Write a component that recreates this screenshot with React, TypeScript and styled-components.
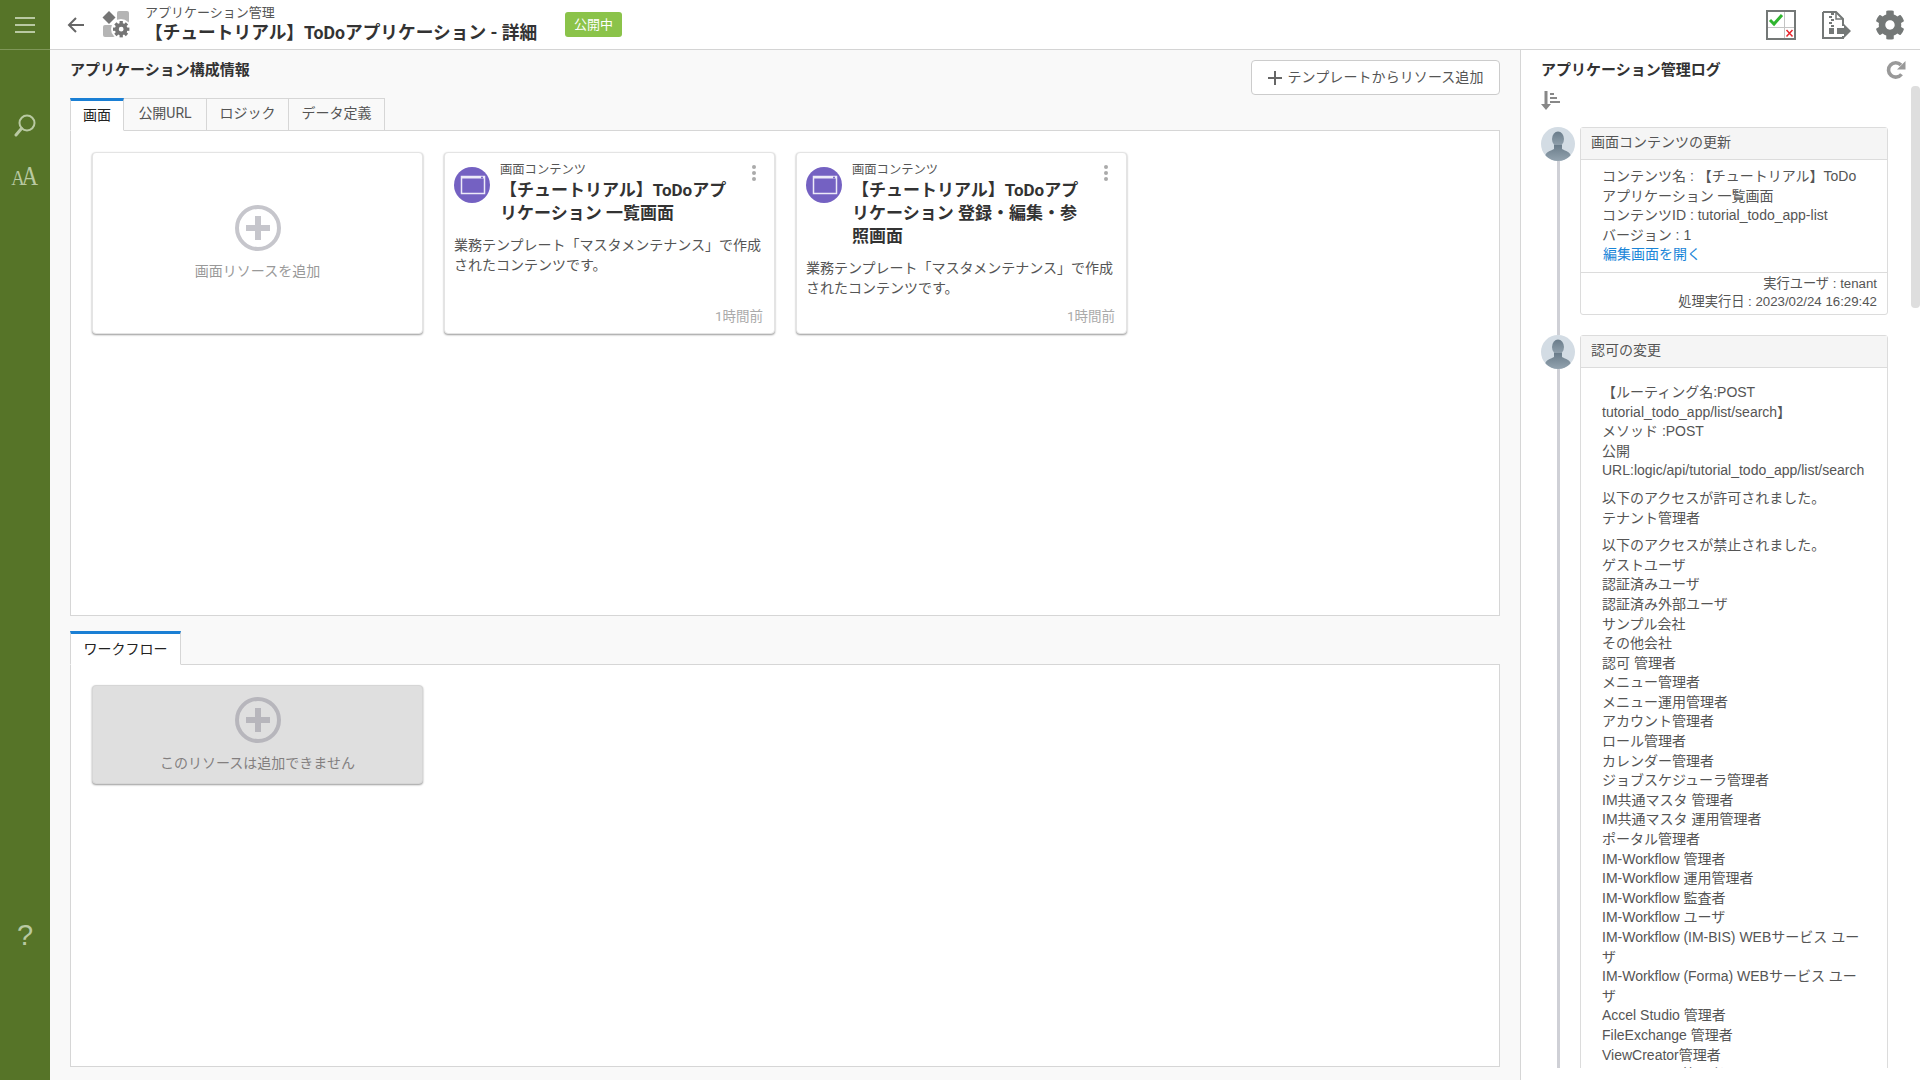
import styled, { createGlobalStyle } from 'styled-components';
import { FaCog } from 'react-icons/fa';

const CJK = `"Noto Sans CJK JP", sans-serif`;

const GlobalStyle = createGlobalStyle`
  html, body { margin: 0; padding: 0; height: 100%; background: #fff; }
  * { box-sizing: border-box; }
  body { font-family: Roboto, ${CJK}; color: #444; overflow: hidden; }
`;

const Page = styled.div`
  display: flex;
  width: 1920px;
  height: 1080px;
  overflow: hidden;
`;

const SideBar = styled.nav`
  width: 50px;
  flex: none;
  background: #567428;
  color: #b9c9a2;
  display: flex;
  flex-direction: column;
  align-items: center;
`;

const SideTop = styled.div`
  width: 100%;
  height: 50px;
  border-bottom: 1px solid #7f9758;
  display: flex;
  align-items: center;
  justify-content: center;
  margin-bottom: 61px;
`;

const SideItem = styled.div<{ $after: number }>`
  height: 28px;
  margin-bottom: ${p => p.$after}px;
  display: flex;
  align-items: center;
  justify-content: center;
`;

const SideAa = styled(SideItem)`
  font-family: "Liberation Serif", serif;
  font-size: 27px;
  letter-spacing: -4px;
  padding-right: 4px;
  align-items: baseline;
  line-height: 28px;
  transform: scaleX(0.85);
  span { font-size: 22px; }
`;

const SideHelp = styled.div`
  margin-top: auto;
  margin-bottom: 130px;
  font-size: 29px;
  line-height: 30px;
  font-family: "Liberation Sans", sans-serif;
`;

const Main = styled.div`
  flex: 1;
  min-width: 0;
  display: flex;
  flex-direction: column;
`;

const Header = styled.header`
  height: 50px;
  flex: none;
  background: #fff;
  border-bottom: 1px solid #d4d4d4;
  display: flex;
  align-items: center;
  padding-left: 16px;
`;

const BackBtn = styled.div`
  width: 20px;
  height: 20px;
  margin-right: 16px;
  display: flex;
`;

const AppIcon = styled.div`
  width: 30px;
  height: 28px;
  margin-right: 13px;
  display: flex;
`;

const TitleBlock = styled.div`
  display: flex;
  flex-direction: column;
  width: 420px;
`;

const Crumb = styled.div`
  font-size: 13px;
  line-height: 15px;
  color: #555;
`;

const PageTitle = styled.h1`
  margin: 1px 0 0;
  font-size: 17.7px;
  font-weight: 700;
  line-height: 24px;
  color: #333;
  white-space: nowrap;
`;

const Badge = styled.div`
  width: 57px;
  height: 25px;
  margin-bottom: 1px;
  padding-bottom: 2px;
  border-radius: 3px;
  background: #8bc34a;
  color: #fff;
  font-size: 13px;
  display: flex;
  align-items: center;
  justify-content: center;
`;

const HeaderTools = styled.div`
  margin-left: auto;
  display: flex;
  align-items: center;
  padding-right: 15px;
  color: #747877;
`;

const ToolIcon = styled.div<{ $gap: number }>`
  display: flex;
  margin-left: ${p => p.$gap}px;
`;

const Body = styled.div`
  flex: 1;
  min-height: 0;
  display: flex;
`;

const LeftPane = styled.section`
  width: 1470px;
  flex: none;
  background: #f9f9f9;
  padding: 10px 20px 0;
  display: flex;
  flex-direction: column;
`;

const SectionHead = styled.div`
  height: 38px;
  display: flex;
  align-items: flex-start;
  justify-content: space-between;
`;

const SectionTitle = styled.h2`
  margin: 0;
  font-size: 15px;
  line-height: 20px;
  font-weight: 700;
  color: #333;
`;

const AddButton = styled.button`
  width: 249px;
  height: 35px;
  background: #fff;
  border: 1px solid #ccc;
  border-radius: 4px;
  font-family: inherit;
  font-size: 14px;
  letter-spacing: 0.08px;
  color: #555;
  display: flex;
  align-items: center;
  justify-content: center;
  gap: 6px;
  padding: 0 0 3px;
`;

const TabBar = styled.div<{ $h: number }>`
  display: flex;
  height: ${p => p.$h}px;
`;

const Tab = styled.div<{ $active?: boolean; $w: number }>`
  width: ${p => p.$w}px;
  height: 100%;
  font-size: 14px;
  display: flex;
  align-items: center;
  justify-content: center;
  padding-bottom: ${p => (p.$active ? 3 : 5)}px;
  position: relative;
  z-index: 1;
  color: ${p => (p.$active ? '#222' : '#555')};
  background: ${p => (p.$active ? '#fff' : '#f9f9f9')};
  border: 1px solid #d6d6d6;
  border-left-width: ${p => (p.$active ? 1 : 0)}px;
  border-top: ${p => (p.$active ? '3px solid #1a7fd4' : '1px solid #d6d6d6')};
  border-bottom: ${p => (p.$active ? '1px solid #fff' : '1px solid #d6d6d6')};
`;

const TabPanel = styled.div<{ $h: number; $after: number; $top: number }>`
  height: ${p => p.$h}px;
  margin-top: -1px;
  margin-bottom: ${p => p.$after}px;
  background: #fff;
  border: 1px solid #d6d6d6;
  padding: ${p => p.$top}px 20px 20px 21px;
  display: flex;
  align-items: flex-start;
  gap: 21px;
`;

const AddCard = styled.div<{ $disabled?: boolean }>`
  width: 331px;
  height: ${p => (p.$disabled ? 99 : 182)}px;
  border-radius: 4px;
  background: ${p => (p.$disabled ? '#dfdfdf' : '#fff')};
  border: 1px solid ${p => (p.$disabled ? '#d6d6d6' : '#e4e4e4')};
  box-shadow: 0 1px 2px rgba(0, 0, 0, 0.4);
  display: flex;
  flex-direction: column;
  align-items: center;
  padding-top: ${p => (p.$disabled ? 11 : 52)}px;
  font-size: 14px;
  line-height: 20px;
  color: ${p => (p.$disabled ? '#837f7f' : '#999')};
`;

const AddLabel = styled.div`
  margin-top: 10px;
`;

const ResCard = styled.article`
  width: 331px;
  height: 182px;
  border-radius: 4px;
  background: #fff;
  border: 1px solid #e4e4e4;
  box-shadow: 0 1px 2px rgba(0, 0, 0, 0.4);
  padding: 9px 11px 7px 9px;
  display: flex;
  flex-direction: column;
`;

const ResHead = styled.div`
  display: flex;
`;

const ResIcon = styled.div`
  width: 36px;
  height: 36px;
  margin: 5px 10px 0 0;
  flex: none;
  display: flex;
`;

const ResText = styled.div`
  flex: 1;
  min-width: 0;
  padding-right: 10px;
`;

const ResType = styled.div`
  font-size: 12.3px;
  line-height: 16px;
  color: #555;
`;

const ResTitle = styled.div`
  font-size: 17px;
  font-weight: 700;
  line-height: 23px;
  color: #333;
  margin-top: 1px;
`;

const Dots = styled.div`
  width: 22px;
  flex: none;
  margin-top: 3px;
  padding-left: 4px;
  display: flex;
  flex-direction: column;
  align-items: center;
  gap: 2px;
  i {
    width: 4px;
    height: 4px;
    border-radius: 50%;
    background: #aaa;
  }
`;

const ResDesc = styled.p`
  margin: 10px 0 0;
  font-size: 14px;
  line-height: 20px;
  color: #555;
`;

const ResTime = styled.div`
  margin-top: auto;
  text-align: right;
  font-size: 13.5px;
  line-height: 20px;
  color: #aaa;
`;

const RightPane = styled.aside`
  width: 400px;
  flex: none;
  background: #fff;
  border-left: 1px solid #d6d6d6;
  padding: 10px 0 0 20px;
  position: relative;
  display: flex;
  flex-direction: column;
`;

const LogHead = styled.div`
  display: flex;
  justify-content: space-between;
  align-items: center;
  height: 20px;
  padding-right: 14px;
  color: #999;
`;

const SortIcon = styled.div`
  height: 42px;
  padding-top: 11px;
  display: flex;
  align-items: flex-start;
`;

const Scrollbar = styled.div`
  position: absolute;
  top: 36px;
  right: 0;
  width: 9px;
  height: 222px;
  border-radius: 4px;
  background: #dedede;
`;

const LogList = styled.div`
  height: 941px;
  margin-top: 5px;
  overflow: hidden;
  padding-right: 32px;
`;

const LogItem = styled.div`
  display: flex;
  gap: 5px;
`;

const LogRail = styled.div`
  width: 34px;
  flex: none;
  display: flex;
  flex-direction: column;
  align-items: center;
`;

const RailLine = styled.div`
  flex: 1;
  width: 3px;
  background: #cfd0d6;
`;

const LogCard = styled.div`
  flex: 1;
  min-width: 0;
  margin-bottom: 20px;
  border: 1px solid #dcdcdc;
  border-radius: 3px;
  font-family: "Liberation Sans", ${CJK};
  font-size: 14px;
  line-height: 19.6px;
  color: #555;
`;

const LogTitle = styled.div`
  height: 32px;
  padding: 0 0 1px 10px;
  background: #f5f5f5;
  border-bottom: 1px solid #dcdcdc;
  display: flex;
  align-items: center;
`;

const LogBody = styled.div<{ $top: number }>`
  padding: ${p => p.$top}px 20px 7px 21px;
  p { margin: 0 0 8px; }
  p:last-child { margin-bottom: 0; }
`;

const LogLink = styled.a`
  color: #1a85d8;
  padding-left: 1px;
`;

const LogFoot = styled.div`
  border-top: 1px solid #dcdcdc;
  padding: 2px 10px 3px;
  text-align: right;
  font-size: 13.25px;
  line-height: 18px;
`;

const Line = styled.div``;

const MenuIcon = () => (
  <svg width="20" height="16" viewBox="0 0 20 16" fill="currentColor">
    <rect x="0" y="0" width="20" height="2" />
    <rect x="0" y="7" width="20" height="2" />
    <rect x="0" y="14" width="20" height="2" />
  </svg>
);

const SearchIcon = () => (
  <svg width="24" height="24" viewBox="0 0 24 24" fill="none" stroke="currentColor">
    <circle cx="14" cy="10" r="7.5" strokeWidth="2" />
    <path d="M8.5 15.5 L3 22" strokeWidth="3" strokeLinecap="round" />
  </svg>
);

const BackIcon = () => (
  <svg width="20" height="20" viewBox="0 0 20 20" fill="none" stroke="#666" strokeWidth="2">
    <path d="M18 10H3M10 3l-7 7 7 7" />
  </svg>
);

const ComposeIcon = () => (
  <svg width="30" height="28" viewBox="0 0 30 28">
    <rect x="15" y="0" width="12" height="12" rx="2" fill="#b5b5b5" />
    <rect x="1" y="14" width="12" height="12" rx="2" fill="#b5b5b5" />
    <path d="M7 0l6.5 6.5-6.5 6.5-6.5-6.5z" fill="#757575" />
    <circle cx="19" cy="18" r="10" fill="#fff" />
    <g transform="translate(11 10) scale(0.032)">
      <circle cx="256" cy="256" r="135" fill="none" stroke="#757575" strokeWidth="120" />
      <g fill="#757575">
        {[0, 45, 90, 135, 180, 225, 270, 315].map(a => (
          <rect key={a} x="205" y="0" width="102" height="120" transform={`rotate(${a} 256 256)`} />
        ))}
      </g>
    </g>
  </svg>
);

const CheckTableIcon = () => (
  <svg width="30" height="30" viewBox="0 0 30 30">
    <rect x="1" y="1" width="28" height="28" fill="#fff" stroke="#747877" strokeWidth="2" />
    <path d="M18.5 2v26M2 17.5h26" stroke="#c4c4c4" strokeWidth="1" />
    <path d="M4 10l4 4 8-9" fill="none" stroke="#2fb52f" strokeWidth="3" />
    <path d="M20.5 20l6 6.5M26.5 20l-6 6.5" stroke="#e8262e" strokeWidth="1.5" />
  </svg>
);

const ZipExportIcon = () => (
  <svg width="29" height="28" viewBox="0 0 29 28">
    <path d="M1 1h13l7 7v7M21 25v2H1V1" fill="none" stroke="#747877" strokeWidth="2" />
    <path d="M14 1v7h7" fill="none" stroke="#747877" strokeWidth="1.5" />
    <path d="M9 2h3v2H9zM7 5h3v2H7zM9 8h3v2H9zM7 11h3v2H7zM9 14h3v2H9z" fill="#747877" />
    <rect x="7" y="17" width="5" height="6" fill="#747877" />
    <path d="M15 17h7v-4l7 7-7 7v-4h-7z" fill="#747877" />
  </svg>
);

const RefreshIcon = () => (
  <svg width="20" height="20" viewBox="0 0 20 20" fill="none">
    <path d="M15.5 14.2A7.2 7.2 0 1 1 15 5" stroke="#999" strokeWidth="3.6" />
    <path d="M19.5 1v8.5H11z" fill="#999" />
  </svg>
);

const SortDownIcon = () => (
  <svg width="20" height="19" viewBox="0 0 20 19" fill="#888">
    <path d="M3.5 0h3v13h3.5l-5 6-5-6h3.5z" />
    <rect x="9" y="2" width="4" height="2" />
    <rect x="9" y="6" width="7" height="2" />
    <rect x="9" y="10" width="10" height="2" />
  </svg>
);

const PlusCircle = ({ color }: { color: string }) => (
  <svg width="46" height="46" viewBox="0 0 46 46">
    <circle cx="23" cy="23" r="21" fill="none" stroke={color} strokeWidth="4" />
    <path d="M20 11h6v9h9v6h-9v9h-6v-9h-9v-6h9z" fill={color} />
  </svg>
);

const ScreenBadge = () => (
  <svg width="36" height="36" viewBox="0 0 36 36">
    <circle cx="18" cy="18" r="18" fill="#7461c2" />
    <rect x="7.5" y="9.5" width="23" height="17" fill="none" stroke="#eceaf8" strokeWidth="1.5" />
    <rect x="7" y="9" width="24" height="2.5" fill="#eceaf8" />
    <circle cx="28" cy="10.5" r="1" fill="#7461c2" />
  </svg>
);

const Avatar = () => (
  <svg width="34" height="34" viewBox="0 0 34 34" style={{ flex: 'none' }}>
    <defs>
      <linearGradient id="sil" x1="0" y1="0" x2="0" y2="1">
        <stop offset="0" stopColor="#6a7c8a" />
        <stop offset="1" stopColor="#93a3af" />
      </linearGradient>
      <clipPath id="round">
        <circle cx="17" cy="17" r="17" />
      </clipPath>
    </defs>
    <circle cx="17" cy="17" r="17" fill="#d3dce4" />
    <g clipPath="url(#round)" fill="url(#sil)">
      <ellipse cx="17" cy="12" rx="6" ry="7.5" />
      <path d="M13 18h8v4c4 2 8 3 9 7v5H4v-5c1-4 5-5 9-7z" />
    </g>
  </svg>
);

const PlusThin = () => (
  <svg width="14" height="14" viewBox="0 0 14 14" stroke="#666" strokeWidth="2" style={{ marginTop: 3 }}>
    <path d="M7 0v14M0 7h14" />
  </svg>
);

const allowed = ['以下のアクセスが許可されました。', 'テナント管理者'];
const denied = [
  '以下のアクセスが禁止されました。',
  'ゲストユーザ',
  '認証済みユーザ',
  '認証済み外部ユーザ',
  'サンプル会社',
  'その他会社',
  '認可 管理者',
  'メニュー管理者',
  'メニュー運用管理者',
  'アカウント管理者',
  'ロール管理者',
  'カレンダー管理者',
  'ジョブスケジューラ管理者',
  'IM共通マスタ 管理者',
  'IM共通マスタ 運用管理者',
  'ポータル管理者',
  'IM-Workflow 管理者',
  'IM-Workflow 運用管理者',
  'IM-Workflow 監査者',
  'IM-Workflow ユーザ',
  'IM-Workflow (IM-BIS) WEBサービス ユーザ',
  'IM-Workflow (Forma) WEBサービス ユーザ',
  'Accel Studio 管理者',
  'FileExchange 管理者',
  'ViewCreator管理者',
  'PageBuilder 管理者',
];

const desc = '業務テンプレート「マスタメンテナンス」で作成されたコンテンツです。';

export default function App() {
  return (
    <Page>
      <GlobalStyle />
      <SideBar>
        <SideTop><MenuIcon /></SideTop>
        <SideItem $after={23}><SearchIcon /></SideItem>
        <SideAa $after={0}><span>A</span>A</SideAa>
        <SideHelp>?</SideHelp>
      </SideBar>
      <Main>
        <Header>
          <BackBtn><BackIcon /></BackBtn>
          <AppIcon><ComposeIcon /></AppIcon>
          <TitleBlock>
            <Crumb>アプリケーション管理</Crumb>
            <PageTitle>【チュートリアル】ToDoアプリケーション - 詳細</PageTitle>
          </TitleBlock>
          <Badge>公開中</Badge>
          <HeaderTools>
            <ToolIcon $gap={0}><CheckTableIcon /></ToolIcon>
            <ToolIcon $gap={26}><ZipExportIcon /></ToolIcon>
            <ToolIcon $gap={24}><FaCog size={30} /></ToolIcon>
          </HeaderTools>
        </Header>
        <Body>
          <LeftPane>
            <SectionHead>
              <SectionTitle>アプリケーション構成情報</SectionTitle>
              <AddButton><PlusThin />テンプレートからリソース追加</AddButton>
            </SectionHead>
            <TabBar $h={33}>
              <Tab $active $w={54}>画面</Tab>
              <Tab $w={83}>公開URL</Tab>
              <Tab $w={82}>ロジック</Tab>
              <Tab $w={96}>データ定義</Tab>
            </TabBar>
            <TabPanel $h={486} $after={15} $top={21}>
              <AddCard>
                <PlusCircle color="#c6c6cc" />
                <AddLabel>画面リソースを追加</AddLabel>
              </AddCard>
              <ResCard>
                <ResHead>
                  <ResIcon><ScreenBadge /></ResIcon>
                  <ResText>
                    <ResType>画面コンテンツ</ResType>
                    <ResTitle>【チュートリアル】ToDoアプリケーション 一覧画面</ResTitle>
                  </ResText>
                  <Dots><i /><i /><i /></Dots>
                </ResHead>
                <ResDesc>{desc}</ResDesc>
                <ResTime>1時間前</ResTime>
              </ResCard>
              <ResCard>
                <ResHead>
                  <ResIcon><ScreenBadge /></ResIcon>
                  <ResText>
                    <ResType>画面コンテンツ</ResType>
                    <ResTitle>【チュートリアル】ToDoアプリケーション 登録・編集・参照画面</ResTitle>
                  </ResText>
                  <Dots><i /><i /><i /></Dots>
                </ResHead>
                <ResDesc>{desc}</ResDesc>
                <ResTime>1時間前</ResTime>
              </ResCard>
            </TabPanel>
            <TabBar $h={34}>
              <Tab $active $w={111}>ワークフロー</Tab>
            </TabBar>
            <TabPanel $h={403} $after={0} $top={20}>
              <AddCard $disabled>
                <PlusCircle color="#b7b6bc" />
                <AddLabel>このリソースは追加できません</AddLabel>
              </AddCard>
            </TabPanel>
          </LeftPane>
          <RightPane>
            <LogHead>
              <SectionTitle>アプリケーション管理ログ</SectionTitle>
              <RefreshIcon />
            </LogHead>
            <SortIcon><SortDownIcon /></SortIcon>
            <Scrollbar />
            <LogList>
              <LogItem>
                <LogRail><Avatar /><RailLine /></LogRail>
                <LogCard>
                  <LogTitle>画面コンテンツの更新</LogTitle>
                  <LogBody $top={7}>
                    <Line>コンテンツ名 : 【チュートリアル】ToDoアプリケーション 一覧画面</Line>
                    <Line>コンテンツID : tutorial_todo_app-list</Line>
                    <Line>バージョン : 1</Line>
                    <LogLink>編集画面を開く</LogLink>
                  </LogBody>
                  <LogFoot>
                    <Line>実行ユーザ : tenant</Line>
                    <Line>処理実行日 : 2023/02/24 16:29:42</Line>
                  </LogFoot>
                </LogCard>
              </LogItem>
              <LogItem>
                <LogRail><Avatar /><RailLine /></LogRail>
                <LogCard>
                  <LogTitle>認可の変更</LogTitle>
                  <LogBody $top={15}>
                    <p>
                      <Line>【ルーティング名:POST tutorial_todo_app/list/search】</Line>
                      <Line>メソッド :POST</Line>
                      <Line>公開URL:logic/api/tutorial_todo_app/list/search</Line>
                    </p>
                    <p>
                      {allowed.map(t => <Line key={t}>{t}</Line>)}
                    </p>
                    <p>
                      {denied.map(t => <Line key={t}>{t}</Line>)}
                    </p>
                  </LogBody>
                </LogCard>
              </LogItem>
            </LogList>
          </RightPane>
        </Body>
      </Main>
    </Page>
  );
}
